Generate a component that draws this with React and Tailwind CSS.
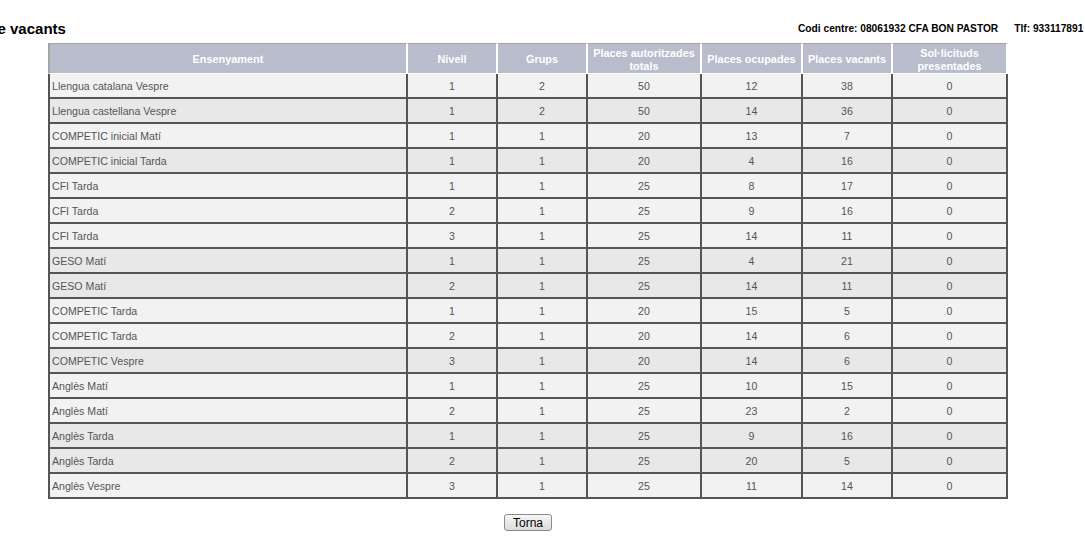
const rows = [
  ["Llengua catalana Vespre", 1, 2, 50, 12, 38, 0],
  ["Llengua castellana Vespre", 1, 2, 50, 14, 36, 0],
  ["COMPETIC inicial Matí", 1, 1, 20, 13, 7, 0],
  ["COMPETIC inicial Tarda", 1, 1, 20, 4, 16, 0],
  ["CFI Tarda", 1, 1, 25, 8, 17, 0],
  ["CFI Tarda", 2, 1, 25, 9, 16, 0],
  ["CFI Tarda", 3, 1, 25, 14, 11, 0],
  ["GESO Matí", 1, 1, 25, 4, 21, 0],
  ["GESO Matí", 2, 1, 25, 14, 11, 0],
  ["COMPETIC Tarda", 1, 1, 20, 15, 5, 0],
  ["COMPETIC Tarda", 2, 1, 20, 14, 6, 0],
  ["COMPETIC Vespre", 3, 1, 20, 14, 6, 0],
  ["Anglès Matí", 1, 1, 25, 10, 15, 0],
  ["Anglès Matí", 2, 1, 25, 23, 2, 0],
  ["Anglès Tarda", 1, 1, 25, 9, 16, 0],
  ["Anglès Tarda", 2, 1, 25, 20, 5, 0],
  ["Anglès Vespre", 3, 1, 25, 11, 14, 0],
];

const headers = [
  { label: "Ensenyament", w: "w-[360px]" },
  { label: "Nivell", w: "w-[90px]" },
  { label: "Grups", w: "w-[90px]" },
  { label: "Places autoritzades totals", w: "w-[114px]" },
  { label: "Places ocupades", w: "w-[101px]" },
  { label: "Places vacants", w: "w-[90px]" },
  { label: "Sol·licituds presentades", w: "w-[115px]" },
];

// rows of the same ensenyament share a shade, shade flips per group
const shades = [];
rows.forEach((r, i) => {
  if (i === 0) shades.push(false);
  else if (r[0] === rows[i - 1][0]) shades.push(shades[i - 1]);
  else shades.push(!shades[i - 1]);
});

export default function App() {
  return (
    <div className="w-[1085px] h-[559px] overflow-hidden bg-white font-['Liberation_Sans',Arial,sans-serif]">
      <div className="flex items-center h-[20px] mt-[19px] mb-[4px]">
        <div className="w-[798px] shrink-0 whitespace-nowrap">
          <h1 className="-ml-[60px] text-[15px] leading-[20px] font-bold text-black">
            Oferta de vacants
          </h1>
        </div>
        <div className="whitespace-nowrap text-[10.2px] leading-[14px] font-bold text-black">
          <span>Codi centre: 08061932 CFA BON PASTOR</span>
          <span className="ml-[16px]">Tlf: 933117891</span>
        </div>
      </div>

      <table className="ml-[48px] w-[960px] table-fixed border-separate border-spacing-0">
        <thead>
          <tr>
            {headers.map((h, i) => (
              <th
                key={h.label}
                className={`${h.w} h-[31px] px-0 pt-[2px] bg-[#b9bccb] text-white text-[10.9px] leading-[13px] font-bold text-center align-middle border-t border-t-[#a3a3a3] border-b border-b-white border-r-2 border-r-white ${
                  i === 0 ? "border-l-2 border-l-[#a3a3a3]" : ""
                } ${i === headers.length - 1 ? "border-r-[#777]" : ""}`}
              >
                {h.label}
              </th>
            ))}
          </tr>
        </thead>
        <tbody>
          {rows.map((r, ri) => (
            <tr key={ri} className={shades[ri] ? "bg-[#e8e8e8]" : "bg-[#f2f2f2]"}>
              {r.map((c, ci) => (
                <td
                  key={ci}
                  className={`h-[25px] p-0 pt-[2px] text-[10.6px] leading-[13px] text-[#555] align-middle border-b-2 border-b-[#555] border-r-2 border-r-[#555] ${
                    ci === 0 ? "border-l-2 border-l-[#555] text-left pl-[2px]" : "text-center"
                  }`}
                >
                  {c}
                </td>
              ))}
            </tr>
          ))}
        </tbody>
      </table>

      <div className="w-[960px] ml-[48px] flex justify-center mt-[15px]">
        <button className="h-[17px] px-[8px] text-[12px] leading-[14px] text-black bg-gradient-to-b from-[#f6f6f6] to-[#dcdcdc] border border-[#8a8a8a] rounded-[3px]">
          Torna
        </button>
      </div>
    </div>
  );
}
